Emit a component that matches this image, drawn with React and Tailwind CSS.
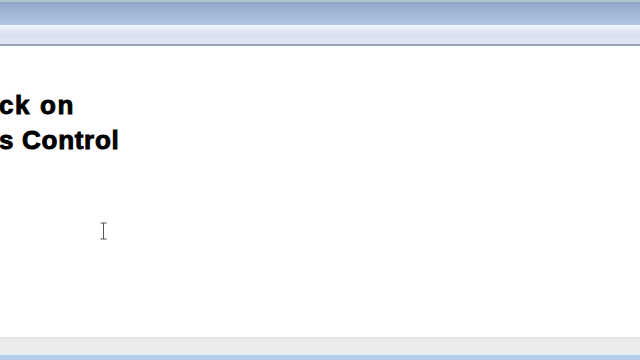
export default function App() {
  return (
    <div className="w-[640px] h-[360px] flex flex-col overflow-hidden bg-white relative" style={{ fontFamily: '"Liberation Sans", Arial, sans-serif' }}>
      <div className="h-[2px] bg-[#a9c7c9]" />
      <div className="h-[23px] bg-gradient-to-b from-[#93a8c8] to-[#b3c4e6]" />
      <div className="h-[19px] bg-gradient-to-b from-[#f3f7fe] via-[#dadff0] to-[#dfe4f6]" />
      <div className="h-[2px] bg-[#9aa3b3]" />
      <div className="flex-1 bg-white pt-[42px]">
        <div className="text-[26px] font-bold leading-[35px] text-black tracking-[0.7px] [-webkit-text-stroke:0.9px_black] -ml-[1px]">
          <div className="tracking-[1.6px]">ck on</div>
          <div>s Control</div>
        </div>
      </div>
      <div className="h-[2px] bg-[#e6e6e6]" />
      <div className="h-[14px] bg-[#ebebeb]" />
      <div className="h-[2px] bg-[#e4ecf8]" />
      <div className="h-[5px] bg-[#b3cde9]" />
      <svg className="absolute left-[99px] top-[222px]" width="9" height="18" viewBox="0 0 9 18">
        <path d="M1.5 1 H7.5 M4.5 1 V17 M1.5 17 H7.5" stroke="#555" strokeWidth="1" fill="none" />
      </svg>
    </div>
  );
}
